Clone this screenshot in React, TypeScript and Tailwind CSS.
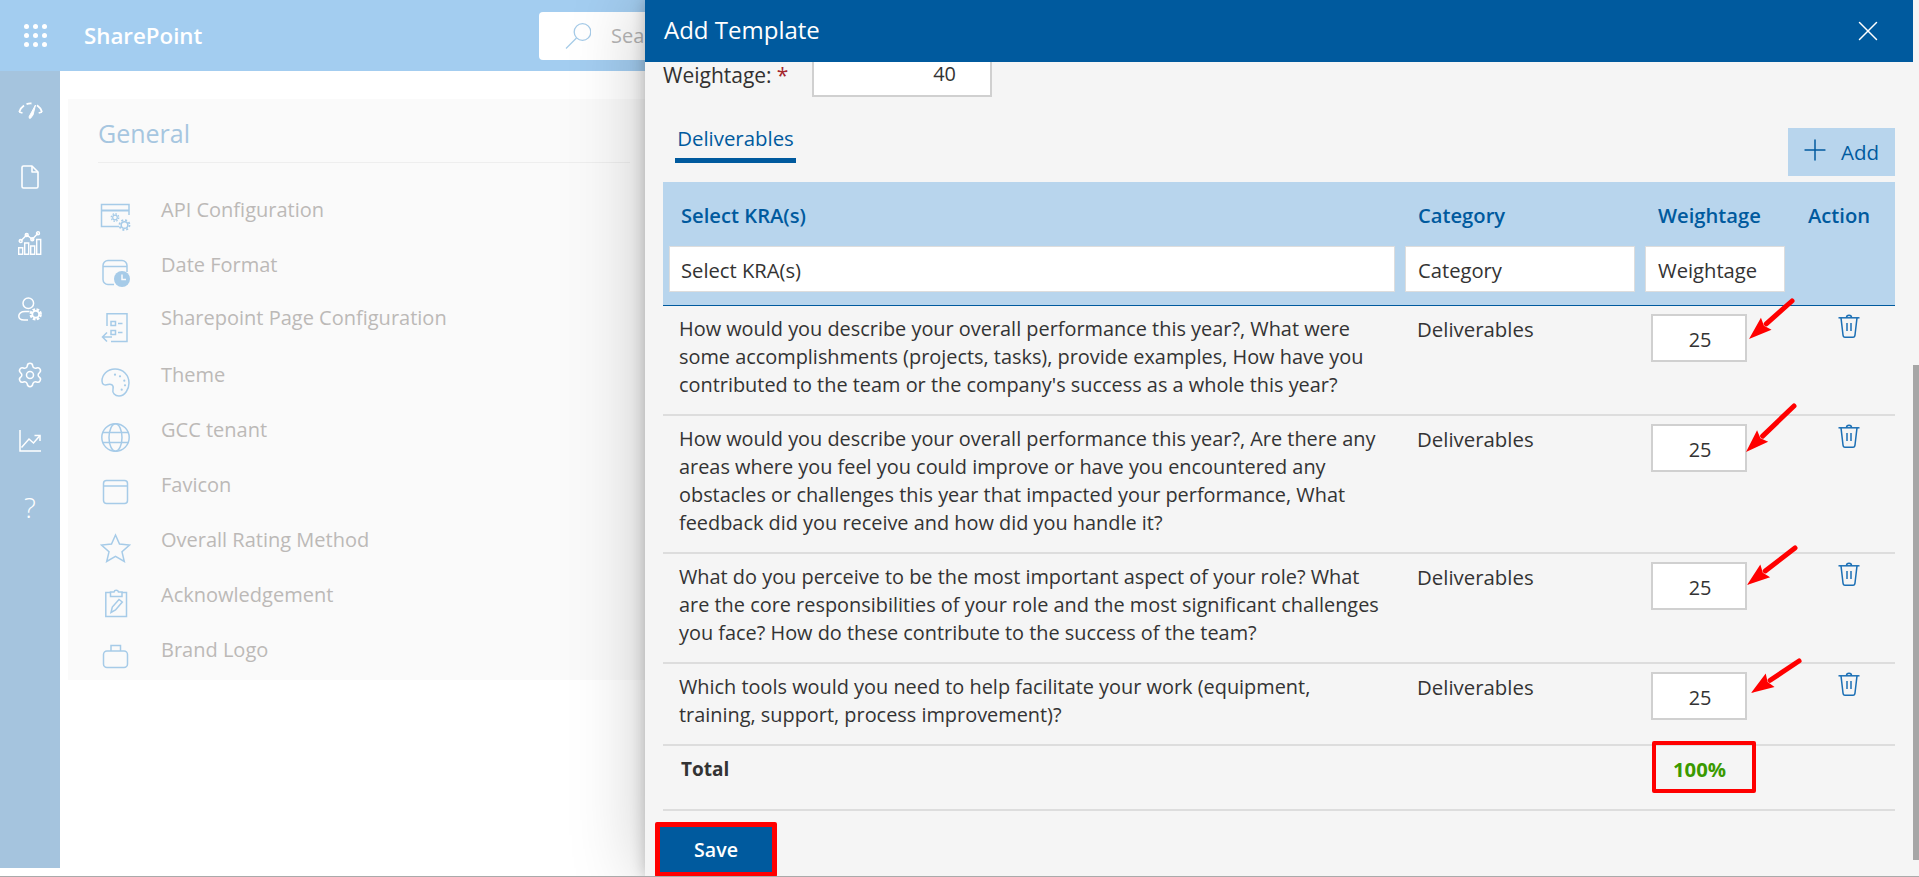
import { Settings, Plus, X } from 'lucide-react';

const FONT = "font-['Open_Sans','Noto_Sans',sans-serif]";

const railIcons = [
  <svg key="gauge" width="25" height="18" viewBox="0 0 25 18" fill="none" stroke="currentColor" strokeWidth="1.800">
    <path d="M1.200 10 A12.500 12.500 0 0 1 6 3.600" />
    <path d="M8.500 2.200 A12.500 12.500 0 0 1 13.500 1.500" />
    <path d="M19 3.200 A12.500 12.500 0 0 1 24 10" />
    <path d="M1.200 10l3.300 1M24 10l-3.300 1" strokeWidth="1.500" />
    <path d="M17.500 3 L11.200 14.500 Q10.600 17 12.600 16.200 L15 13z" fill="currentColor" stroke="currentColor" strokeWidth="1" strokeLinejoin="round" />
  </svg>,
  <svg key="file" width="18" height="24" viewBox="0 0 18 24" fill="none" stroke="currentColor" strokeWidth="1.600" strokeLinejoin="round">
    <path d="M2.500 1H11l6 6v14.500a1.500 1.500 0 0 1-1.500 1.500h-13A1.500 1.500 0 0 1 1 21.500v-19A1.500 1.500 0 0 1 2.500 1z" />
    <path d="M11 1v6h6" />
  </svg>,
  <svg key="bars" width="24" height="24" viewBox="0 0 24 24" fill="none" stroke="currentColor" strokeWidth="1.400">
    <path d="M.7 23.300V16.700h4v6.600zM6.700 23.300V12h4v11.300zM12.700 23.300V15h4v8.300zM18.700 23.300V8.500h4v14.800z" />
    <path d="M2.700 10 L8.700 4 L14.300 8.300 L20 2.300" />
    <circle cx="2.700" cy="10" r="1.500" />
    <circle cx="8.700" cy="4" r="1.500" />
    <circle cx="14.300" cy="8.300" r="1.500" />
    <circle cx="20" cy="2.300" r="1.500" />
  </svg>,
  <svg key="user" width="24" height="24" viewBox="0 0 24 24" fill="none" stroke="currentColor" strokeWidth="1.500">
    <circle cx="10.300" cy="6.200" r="5.300" />
    <path d="M11.500 14.500H7 C3 14.500 .8 16.500 .8 19 C.8 21.500 3 23 6 23H10" />
    <circle cx="17.700" cy="17.300" r="4.800" strokeWidth="2.800" strokeDasharray="2.500 1.300" />
    <circle cx="17.700" cy="17.300" r="3.400" strokeWidth="1.800" />
  </svg>,
  <Settings key="gear" size={28} strokeWidth={1.3} />,
  <svg key="chart" width="22" height="22" viewBox="0 0 22 22" fill="none" stroke="currentColor" strokeWidth="1.500">
    <path d="M1 0v21h21" />
    <path d="M2.500 17.500 L10 9 L14.500 13 L21 5.500" />
    <path d="M15.500 5.500H21V11" />
  </svg>,
  <span key="help" className="text-[28px] font-light leading-none">?</span>,
];

const listItems = [
  { label: 'API Configuration', icon: 'api' },
  { label: 'Date Format', icon: 'date' },
  { label: 'Sharepoint Page Configuration', icon: 'page', nudge: true },
  { label: 'Theme', icon: 'theme' },
  { label: 'GCC tenant', icon: 'globe' },
  { label: 'Favicon', icon: 'favicon' },
  { label: 'Overall Rating Method', icon: 'star' },
  { label: 'Acknowledgement', icon: 'ack' },
  { label: 'Brand Logo', icon: 'brand' },
];

function ListIcon({ name }: { name: string }) {
  const common = { width: 32, height: 30, viewBox: '0 0 32 30', fill: 'none', stroke: '#a6cbe8', strokeWidth: 1.5 };
  switch (name) {
    case 'api':
      return (
        <svg {...common}>
          <path d="M29 12V1.500H1.500V23.500H19" />
          <path d="M1.500 7.500H29" strokeWidth="2" />
          <circle cx="15" cy="14.500" r="2.300" strokeWidth="1.200" />
          <circle cx="15" cy="14.500" r="3.700" strokeWidth="1.400" strokeDasharray="1.500 1.400" />
          <circle cx="24.500" cy="22" r="3.300" />
          <circle cx="24.500" cy="22" r="5" strokeWidth="1.800" strokeDasharray="2 1.930" />
        </svg>
      );
    case 'date':
      return (
        <svg {...common}>
          <path d="M14 26.500H8A5 5 0 0 1 3 21.500V7.500A5 5 0 0 1 8 2.500H22A5 5 0 0 1 27 7.500V14" />
          <path d="M3 8.500H27" />
          <circle cx="22" cy="21" r="8" fill="#a6cbe8" stroke="none" />
          <path d="M22 16.500V21.500H26" stroke="#fafafa" />
        </svg>
      );
    case 'page':
      return (
        <svg {...common}>
          <path d="M7 13V.8H27V28.500H11" />
          <path d="M11 8.500H15.500V12.500H11zM11 17.500H15.500V21.500H11z" />
          <path d="M18 10.500H22.500M18 19.500H22.500" />
          <path d="M2.500 24H12M7 19.500L2.500 24L7 28.500" />
        </svg>
      );
    case 'theme':
      return (
        <svg {...common}>
          <path d="M15 1 C7 1 2 7 2 13 C2 17 5 17.500 8 16.500 C11 15.500 14 17 13 21 C12 25 15 28 19 28 C25 28 29 21 29 15 C29 7 23 1 15 1z" />
          <circle cx="15" cy="6.700" r="1.100" fill="#a6cbe8" stroke="none" />
          <circle cx="20" cy="8.300" r="1.100" fill="#a6cbe8" stroke="none" />
          <circle cx="24.300" cy="12.700" r="1.100" fill="#a6cbe8" stroke="none" />
          <circle cx="25" cy="17.300" r="1.100" fill="#a6cbe8" stroke="none" />
          <circle cx="21.700" cy="21.700" r="1.100" fill="#a6cbe8" stroke="none" />
        </svg>
      );
    case 'globe':
      return (
        <svg {...common}>
          <circle cx="15.500" cy="14.500" r="13.700" />
          <ellipse cx="15.500" cy="14.500" rx="6.500" ry="13.700" />
          <path d="M3 9.500H28M3 19.500H28" />
        </svg>
      );
    case 'favicon':
      return (
        <svg {...common}>
          <rect x="3.500" y="2.500" width="24" height="23" rx="3" />
          <path d="M3.500 8H27.500" />
        </svg>
      );
    case 'star':
      return (
        <svg {...common}>
          <path d="M15.500 2 L19.500 11 L29.500 12 L22 18.800 L24.300 28.500 L15.500 23.400 L6.700 28.500 L9 18.800 L1.500 12 L11.500 11z" />
        </svg>
      );
    case 'ack':
      return (
        <svg {...common}>
          <path d="M10 4.500H5.800V28.500H26.500V4.500H22" />
          <path d="M10.500 8.500V4H14A2.300 2.300 0 0 1 18.500 4H22V8.500z" />
          <path d="M11 24.500L12.300 19L19 11.500L22.300 14L15.500 22z" />
        </svg>
      );
    default:
      return (
        <svg {...common}>
          <rect x="3.500" y="8" width="24" height="16.500" rx="3.500" />
          <path d="M11 8V2.500H20.500V8" />
        </svg>
      );
  }
}

function TrashIcon() {
  return (
    <svg width="22" height="24" viewBox="0 0 22 24" fill="none" stroke="#1b6fb5" strokeWidth="1.500">
      <path d="M.5 3.800H21.500" />
      <path d="M8.500 3.800a2.500 2.500 0 0 1 5 0" />
      <path d="M3 3.800 L5 21 Q5.200 23.200 7 23.200 H15 Q16.800 23.200 17 21 L19 3.800" />
      <path d="M9 9V17M13 9V17" />
    </svg>
  );
}

// tail and tip of each annotation arrow, measured from the input's top left corner
const rows = [
  {
    text: "How would you describe your overall performance this year?, What were some accomplishments (projects, tasks), provide examples, How have you contributed to the team or the company's success as a whole this year?",
    arrow: { tail: [141, -13], tip: [98, 25] },
  },
  {
    text: 'How would you describe your overall performance this year?, Are there any areas where you feel you could improve or have you encountered any obstacles or challenges this year that impacted your performance, What feedback did you receive and how did you handle it?',
    arrow: { tail: [143, -18], tip: [95, 28] },
  },
  {
    text: 'What do you perceive to be the most important aspect of your role? What are the core responsibilities of your role and the most significant challenges you face? How do these contribute to the success of the team?',
    arrow: { tail: [144, -14], tip: [96, 23] },
  },
  {
    text: 'Which tools would you need to help facilitate your work (equipment, training, support, process improvement)?',
    arrow: { tail: [148, -11], tip: [100, 21] },
  },
];

function Arrow({ tail, tip }: { tail: number[]; tip: number[] }) {
  const dx = tip[0] - tail[0];
  const dy = tip[1] - tail[1];
  const len = Math.hypot(dx, dy);
  const ux = dx / len;
  const uy = dy / len;
  const bx = tip[0] - ux * 23;
  const by = tip[1] - uy * 23;
  const head = `${tip[0]},${tip[1]} ${bx - uy * 8},${by + ux * 8} ${bx + ux * 3},${by + uy * 3} ${bx + uy * 8},${by - ux * 8}`;
  return (
    <svg className="absolute left-0 top-0 overflow-visible pointer-events-none" width="1" height="1">
      <line x1={tail[0]} y1={tail[1]} x2={bx} y2={by} stroke="#ff0000" strokeWidth="5" strokeLinecap="round" />
      <polygon points={head} fill="#ff0000" />
    </svg>
  );
}

export default function App() {
  return (
    <div className={`relative h-[877px] overflow-hidden bg-white border-b border-[#aaaaaa] ${FONT}`}>
      <header className="h-[71px] bg-[#a3cdf0] flex items-center">
        <div className="ml-[24px] w-[23px] grid grid-cols-3 gap-[4px]">
          {Array.from({ length: 9 }).map((_, i) => (
            <span key={i} className="w-[5px] h-[5px] rounded-full bg-white" />
          ))}
        </div>
        <span className="ml-[37px] w-[118px] whitespace-nowrap text-white text-[22.3px] font-semibold">SharePoint</span>
        <div className="ml-[337px] w-[106px] h-[48px] overflow-hidden bg-white rounded-l-[4px] flex items-center text-[#b5b5b5]">
          <svg className="ml-[26px] shrink-0" width="26" height="26" viewBox="0 0 26 26" fill="none" stroke="#a6cbe8" strokeWidth="1.300">
            <circle cx="17.500" cy="9" r="8.300" />
            <path d="M11.500 15 L1 25.500" />
          </svg>
          <span className="ml-[20px] text-[20px] whitespace-nowrap">Sea</span>
        </div>
      </header>

      <div className="flex">
        <nav className="w-[60px] h-[797px] bg-[#a5c4de] text-white flex flex-col items-center pt-[25px]">
          {railIcons.map((icon, i) => (
            <div key={i} className="h-[30px] mb-[36px] flex items-center justify-center">
              {icon}
            </div>
          ))}
        </nav>
        <main className="flex-1 pl-[8px] pt-[28px]">
          <div className="h-[581px] bg-[#fafafa] pl-[30px] pt-[17px]">
            <h2 className="text-[25px] leading-[34px] text-[#a6c6e0]">General</h2>
            <div className="w-[532px] mt-[12px] border-t border-[#eeeeee]" />
            <ul className="mt-[33px] flex flex-col gap-[11px]">
              {listItems.map((item) => (
                <li key={item.label} className="h-[44px] flex items-start">
                  <div className="w-[63px] pt-[7px] pl-[2px]">
                    <ListIcon name={item.icon} />
                  </div>
                  <span className={`text-[20px] leading-[28px] text-[#bcb9b7] ${item.nudge ? '-mt-[2px]' : ''}`}>
                    {item.label}
                  </span>
                </li>
              ))}
            </ul>
          </div>
        </main>
      </div>

      <aside className="absolute left-[645px] top-0 bottom-0 right-0 bg-[#f5f5f5] shadow-[0_0_14px_rgba(0,0,0,0.22),0_0_70px_rgba(0,0,0,0.22)]">
        <div className="w-[1268px] h-[62px] bg-[#005a9e] text-white flex items-center justify-between pl-[19px] pr-[28px]">
          <span className="text-[24px] -mt-[2px]">Add Template</span>
          <X size={34} strokeWidth={1.05} />
        </div>
        <div className="absolute right-0 top-[365px] w-[6px] h-[495px] bg-[#a6a6a6]" />

        <div className="pl-[18px] pr-[24px]">
          <div className="flex">
            <label className="w-[149px] whitespace-nowrap text-[21px] leading-[26px] text-[#323130] font-medium">
              Weightage:<span className="ml-[5px] text-[#a4262c]">*</span>
            </label>
            <div className="w-[180px] h-[35px] bg-white border-2 border-t-0 border-[#d0d0d0] text-[19.9px] leading-[24px] text-[#333333] text-right pr-[34px]">
              40
            </div>
          </div>

          <div className="mt-[27px] mb-[6px] h-[52px] flex justify-between items-start">
            <div className="ml-[12px] w-[121px] h-[39px] border-b-[5px] border-[#005a9e] text-center text-[20.4px] leading-[28px] font-medium text-[#005a9e]">
              Deliverables
            </div>
            <button className="mt-[4px] w-[107px] h-[48px] bg-[#b8d5ed] text-[#005a9e] flex items-center pl-[10px] text-[20.5px]">
              <Plus size={34} strokeWidth={1.05} className="-mt-[5px]" />
              <span className="ml-[9px]">Add</span>
            </button>
          </div>

          <div className="h-[124px] bg-[#b8d5ed] border-b border-[#005a9e] pt-[19px] grid grid-cols-[742px_240px_151px_99px] content-start text-[20.2px] leading-[28px]">
            <div className="pl-[18px] font-semibold text-[#005a9e]">Select KRA(s)</div>
            <div className="pl-[13px] font-semibold text-[#005a9e]">Category</div>
            <div className="pl-[13px] font-semibold text-[#005a9e]">Weightage</div>
            <div className="pl-[12px] font-semibold text-[#005a9e]">Action</div>
            <div className="mt-[17px] ml-[6px] mr-[10px] h-[46px] bg-white border border-[#dddddd] pl-[11px] leading-[46px] text-[#333333]">Select KRA(s)</div>
            <div className="mt-[17px] mr-[10px] h-[46px] bg-white border border-[#dddddd] pl-[12px] leading-[46px] text-[#333333]">Category</div>
            <div className="mt-[17px] w-[140px] h-[46px] bg-white border border-[#dddddd] pl-[12px] leading-[46px] text-[#333333]">Weightage</div>
          </div>

          {rows.map((row) => (
            <div key={row.text} className="grid grid-cols-[742px_240px_151px_99px] border-b-2 border-[#dddddd] pb-[15px] pt-[9px] text-[19.9px] leading-[28px] text-[#333333]">
              <div className="pl-[16px] pr-[20px]">{row.text}</div>
              <div className="pl-[12px] text-[20.4px]">Deliverables</div>
              <div className="relative -mt-[1px] ml-[6px] w-[96px] h-[48px]">
                <div className="w-[96px] h-[48px] bg-white border-2 border-[#d0d0d0] text-center leading-[48px] pl-[2px]">25</div>
                <Arrow tail={row.arrow.tail} tip={row.arrow.tip} />
              </div>
              <div className="-mt-[1px] pl-[42px]">
                <TrashIcon />
              </div>
            </div>
          ))}

          <div className="h-[65px] grid grid-cols-[742px_240px_151px_99px] border-b-2 border-[#dddddd] pt-[9px] leading-[28px]">
            <div className="pl-[18px] text-[19px] font-bold text-[#333333]">Total</div>
            <div />
            <div className="relative pl-[28px] text-[20.3px] font-bold text-[#3a9a00]">
              100%
              <div className="absolute left-[7px] -top-[14px] w-[104px] h-[52px] border-4 border-[#ff0000] rounded-[2px]" />
            </div>
          </div>

          <button className="mt-[11px] -ml-[8px] w-[122px] h-[55px] bg-[#005a9e] border-[5px] border-[#ff0000] rounded-[2px] text-white text-[19.6px] font-semibold">
            Save
          </button>
        </div>
      </aside>
    </div>
  );
}
